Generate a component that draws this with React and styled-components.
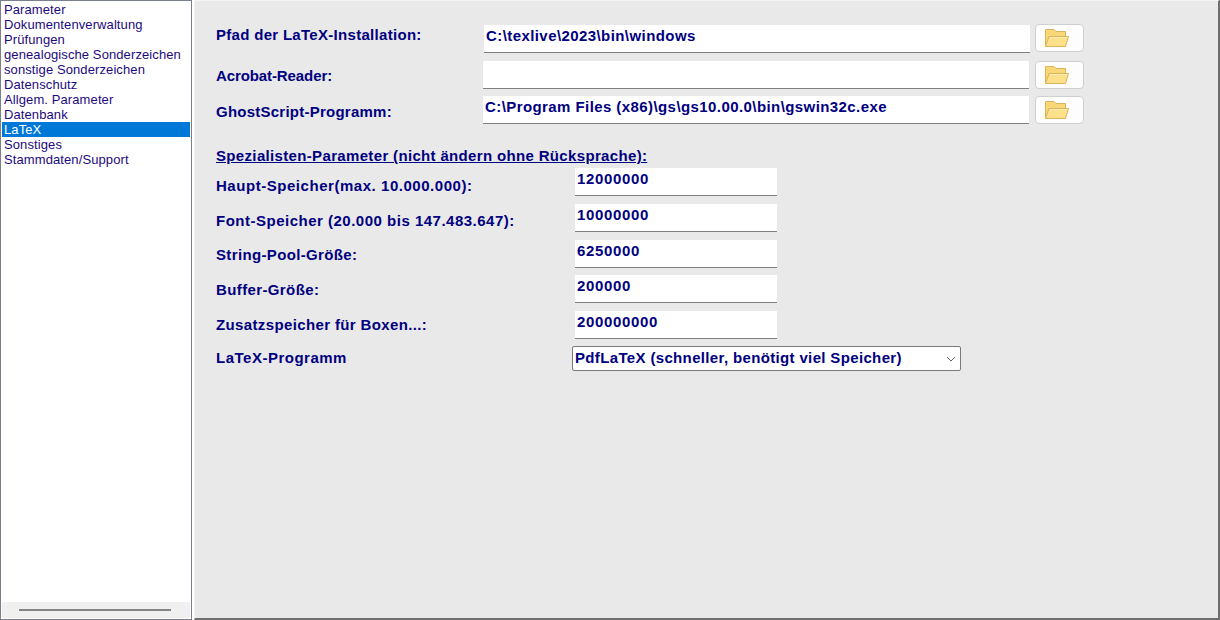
import React from 'react';
import styled, { createGlobalStyle } from 'styled-components';

const menuItems = [
  "Parameter", "Dokumentenverwaltung", "Prüfungen", "genealogische Sonderzeichen",
  "sonstige Sonderzeichen", "Datenschutz", "Allgem. Parameter", "Datenbank",
  "LaTeX", "Sonstiges", "Stammdaten/Support"
];

const paths = [
  { label: "Pfad der LaTeX-Installation:", value: "C:\\texlive\\2023\\bin\\windows", top: 24, labelTop: 1, col: 268, btn: -1, gap: 5, track: 0.3 },
  { label: "Acrobat-Reader:", value: "", top: 8, labelTop: 6, col: 267, btn: 0, gap: 6, track: -0.1 },
  { label: "GhostScript-Programm:", value: "C:\\Program Files (x86)\\gs\\gs10.00.0\\bin\\gswin32c.exe", top: 7, labelTop: 7, col: 267, btn: 0, gap: 6, track: 0.24 },
];

const specials = [
  { label: "Haupt-Speicher(max. 10.000.000):", value: "12000000", top: 0, labelTop: 9, track: 0.54 },
  { label: "Font-Speicher (20.000 bis 147.483.647):", value: "10000000", top: 8, labelTop: 8, track: 0.5 },
  { label: "String-Pool-Größe:", value: "6250000", top: 8, labelTop: 6, track: 0.35 },
  { label: "Buffer-Größe:", value: "200000", top: 7, labelTop: 6, track: 0.38 },
  { label: "Zusatzspeicher für Boxen...:", value: "200000000", top: 8, labelTop: 5, track: 0.37 },
];

const FolderIcon = () => (
  <svg width="24" height="18" viewBox="0 0 24 18">
    <path d="M0.5 17.5V1Q0.5 0.5 1 0.5H9L11 2.5H20.5V7" fill="#fad776" stroke="#dcb25a" />
    <path d="M0.5 17.5L4 7.5H23.5L20.5 17.5Z" fill="#fde08a" stroke="#dcb25a" />
    <path d="M5 8.5H22.5" stroke="#fff0b8" />
  </svg>
);

const App = () => {
  return (
    <Page>
      <GlobalStyle />
      <Sidebar>
        <MenuList>
          {menuItems.map((item) => (
            <MenuItem key={item} $active={item === "LaTeX"}>{item}</MenuItem>
          ))}
        </MenuList>
        <ScrollTrack>
          <ScrollThumb />
        </ScrollTrack>
      </Sidebar>
      <Content>
        {paths.map((row) => (
          <Row key={row.label} $top={row.top}>
            <Label $width={row.col} $top={row.labelTop} $track={row.track}>{row.label}</Label>
            <PathInput>{row.value}</PathInput>
            <BrowseButton $shift={row.btn} $gap={row.gap}><FolderIcon /></BrowseButton>
          </Row>
        ))}
        <SectionTitle>Spezialisten-Parameter (nicht ändern ohne Rücksprache):</SectionTitle>
        {specials.map((row) => (
          <Row key={row.label} $top={row.top}>
            <Label $width={359} $top={row.labelTop} $track={row.track}>{row.label}</Label>
            <NumberInput>{row.value}</NumberInput>
          </Row>
        ))}
        <Row $top={7}>
          <Label $width={356} $top={3} $track={0.5}>LaTeX-Programm</Label>
          <SelectBox>
            PdfLaTeX (schneller, benötigt viel Speicher)
            <Chevron width="10" height="6" viewBox="0 0 10 6">
              <path d="M1 1L5 5L9 1" fill="none" stroke="#666" />
            </Chevron>
          </SelectBox>
        </Row>
      </Content>
    </Page>
  );
};

const GlobalStyle = createGlobalStyle`
body {
  margin: 0;
  background: #fff;
  font-family: "Liberation Sans", Arial, sans-serif;
}
`;

const Page = styled.div`
display: flex;
width: 1220px;
height: 620px;
overflow: hidden;
gap: 2px;
background: #fff;
`;

const Sidebar = styled.nav`
width: 192px;
height: 620px;
box-sizing: border-box;
border: 1px solid #7a7f8c;
padding: 1px;
display: flex;
flex-direction: column;
background: #fff;
`;

const MenuList = styled.ul`
list-style: none;
margin: 0;
padding: 0;
flex: 1;
`;

const MenuItem = styled.li`
height: 15px;
line-height: 16px;
padding-left: 2px;
font-size: 13px;
letter-spacing: 0.1px;
color: ${(p) => (p.$active ? "#fff" : "#1c0a80")};
background: ${(p) => (p.$active ? "#0078d7" : "transparent")};
white-space: nowrap;
`;

const ScrollTrack = styled.div`
height: 16px;
background: #f0f0f0;
display: flex;
align-items: center;
justify-content: center;
padding-right: 2px;
`;

const ScrollThumb = styled.div`
width: 152px;
height: 2px;
background: #858585;
`;

const Content = styled.main`
flex: 1;
height: 620px;
box-sizing: border-box;
background: #e9e9e9;
padding-left: 21px;
border-top: 1px solid #f4f4f4;
border-left: 1px solid #f4f4f4;
border-right: 2px solid #6e6e6e;
border-bottom: 2px solid #6e6e6e;
color: #000080;
font-weight: bold;
font-size: 15px;
`;

const Row = styled.div`
display: flex;
align-items: flex-start;
margin-top: ${(p) => p.$top}px;
`;

const Label = styled.div`
width: ${(p) => p.$width}px;
flex-shrink: 0;
padding-top: ${(p) => p.$top}px;
line-height: 17px;
letter-spacing: ${(p) => p.$track}px;
white-space: nowrap;
`;

const Field = styled.div`
height: 28px;
box-sizing: border-box;
background: #fff;
border-bottom: 1px solid #7f7f7f;
padding-left: 2px;
line-height: 22px;
font-size: 15px;
white-space: nowrap;
`;

const PathInput = styled(Field)`
width: 546px;
letter-spacing: 0.42px;
`;

const NumberInput = styled(Field)`
width: 202px;
letter-spacing: 0.65px;
`;

const BrowseButton = styled.button`
width: 49px;
height: 28px;
margin-left: ${(p) => p.$gap}px;
margin-top: ${(p) => p.$shift}px;
padding: 0 5px 0 0;
box-sizing: border-box;
background: #fdfdfd;
border: 1px solid #cfcfcf;
border-radius: 4px;
display: flex;
align-items: center;
justify-content: center;
`;

const SectionTitle = styled.div`
margin-top: 23px;
height: 21px;
line-height: 17px;
letter-spacing: 0.34px;
text-decoration: underline;
white-space: nowrap;
`;

const SelectBox = styled.div`
position: relative;
width: 389px;
height: 25px;
box-sizing: border-box;
background: #fff;
border: 1px solid #7a7a7a;
border-radius: 2px;
padding-left: 2px;
line-height: 21px;
font-size: 15px;
letter-spacing: 0.35px;
white-space: nowrap;
`;

const Chevron = styled.svg`
position: absolute;
right: 4px;
top: 9px;
`;

export default App;
